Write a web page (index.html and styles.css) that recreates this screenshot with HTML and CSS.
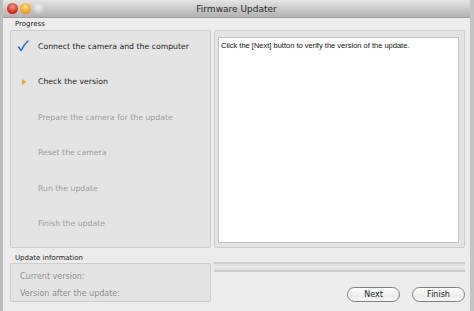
FILE: index.html
```html
<!DOCTYPE html>
<html lang="en">
<head>
    <meta charset="UTF-8">
    <meta name="viewport" content="width=device-width, initial-scale=1.0">
    <title>Firmware Updater</title>
    <link rel="stylesheet" href="styles.css">
</head>
<body>
    <div class="window">
        <div class="titlebar">
            <div class="lights">
                <span class="light red"></span>
                <span class="light yellow"></span>
                <span class="light gray"></span>
            </div>
            <div class="title">Firmware Updater</div>
        </div>

        <div class="content">
            <div class="left">
                <div class="label">Progress</div>
                <div class="box steps">
                    <div class="step done">
                        <span class="icon">
                            <svg width="12" height="12" viewBox="0 0 12 12">
                                <path d="M1.5 7 L4.2 10.5 C6 6.5 8 3.5 11 1" fill="none" stroke="#2d6bc5" stroke-width="1.5" stroke-linecap="round" stroke-linejoin="round"/>
                            </svg>
                        </span>
                        <span class="text">Connect the camera and the computer</span>
                    </div>
                    <div class="step current">
                        <span class="icon">
                            <svg width="12" height="8" viewBox="0 0 12 8">
                                <path d="M5 1 L9.5 4 L5 7 Z" fill="#f0a232"/>
                            </svg>
                        </span>
                        <span class="text">Check the version</span>
                    </div>
                    <div class="step"><span class="icon"></span><span class="text">Prepare the camera for the update</span></div>
                    <div class="step"><span class="icon"></span><span class="text">Reset the camera</span></div>
                    <div class="step"><span class="icon"></span><span class="text">Run the update</span></div>
                    <div class="step"><span class="icon"></span><span class="text">Finish the update</span></div>
                </div>
                <div class="label info-label">Update information</div>
                <div class="box info">
                    <div>Current version:</div>
                    <div>Version after the update:</div>
                </div>
            </div>

            <div class="right">
                <div class="box message">
                    <div class="message-text">Click the [Next] button to verify the version of the update.</div>
                </div>
                <div class="progress"><div class="progress-track"></div></div>
                <div class="buttons">
                    <button type="button">Next</button>
                    <button type="button">Finish</button>
                </div>
            </div>
        </div>
    </div>
</body>
</html>
```

FILE: styles.css
```css
/* Fenster */
body {
    margin: 0;
    font-family: 'DejaVu Sans', sans-serif;
    background: #ececec;
}

.window {
    width: 474px;
    height: 311px;
    box-sizing: border-box;
    border-left: 3px solid #bcbcbc;
    border-right: 4px solid #c4c4c4;
    background: #ececec;
    overflow: hidden;
}

/* Titelleiste */
.titlebar {
    height: 17px;
    position: relative;
    display: flex;
    align-items: center;
    justify-content: center;
    background: linear-gradient(#e4e4e4, #b2b2b2);
    border-bottom: 1px solid #a0a0a0;
}

.lights {
    position: absolute;
    left: 4px;
    top: 3px;
    display: flex;
    gap: 2px;
}

.light {
    width: 11px;
    height: 11px;
    border-radius: 50%;
    box-sizing: border-box;
}

.red {
    background: radial-gradient(circle at 50% 35%, #f59a8c, #d5301e 60%, #a91e12);
}

.yellow {
    background: radial-gradient(circle at 50% 35%, #fbe08a, #efa620 60%, #c67c0c);
}

.gray {
    background: radial-gradient(circle at 50% 35%, #f2f2f2, #cfcfcf 60%, #b0b0b0);
}

.title {
    font-size: 9px;
    color: #2a2a2a;
}

/* Inhalt */
.content {
    display: flex;
    gap: 3px;
    padding-left: 7px;
}

.left {
    width: 201px;
    display: flex;
    flex-direction: column;
}

.right {
    width: 251px;
    display: flex;
    flex-direction: column;
    padding-top: 12px;
}

.label {
    height: 12px;
    padding-left: 5px;
    font-size: 7px;
    line-height: 13px;
    color: #222;
}

.info-label {
    height: 15px;
    line-height: 20px;
}

.box {
    box-sizing: border-box;
    border: 1px solid #cdcdcd;
    border-radius: 2px;
    background: #e4e4e4;
}

/* Schritte */
.steps {
    height: 218px;
    padding: 8px 0 0 6px;
    display: flex;
    flex-direction: column;
    gap: 21.5px;
}

.step {
    display: flex;
    align-items: center;
    height: 14px;
    font-size: 7.75px;
    color: #9c9c9c;
}

.step .icon {
    width: 21px;
    display: flex;
    align-items: center;
}

.step.done,
.step.current {
    color: #1e1e1e;
}

/* Info */
.info {
    height: 39px;
    padding: 8px 0 0 9px;
    font-size: 8px;
    color: #8e8e8e;
    display: flex;
    flex-direction: column;
    gap: 8px;
}

/* Meldung */
.message {
    height: 218px;
    padding: 6px 5px 4px 3px;
}

.message-text {
    height: 100%;
    box-sizing: border-box;
    background: #fff;
    border: 1px solid #c2c2c2;
    padding: 3px 2px;
    font-family: 'Liberation Sans', sans-serif;
    font-size: 7.5px;
    color: #111;
}

/* Fortschritt */
.progress {
    margin-top: 14px;
    height: 10px;
    box-sizing: border-box;
    border-top: 2px solid #cfcfcf;
    border-bottom: 2px solid #cdcdcd;
    background: #e2e2e2;
}

.progress-track {
    height: 2px;
    margin-top: 2px;
    background: #ebebeb;
}

/* Buttons */
.buttons {
    margin-top: 15px;
    display: flex;
    justify-content: flex-end;
    gap: 12px;
}

button {
    width: 53px;
    height: 15px;
    padding: 0;
    border: 1px solid #7f7f7f;
    border-radius: 8px;
    background: linear-gradient(#ffffff, #ececec 60%, #f8f8f8);
    font-family: 'DejaVu Sans', sans-serif;
    font-size: 8px;
    color: #1e1e1e;
}
```
